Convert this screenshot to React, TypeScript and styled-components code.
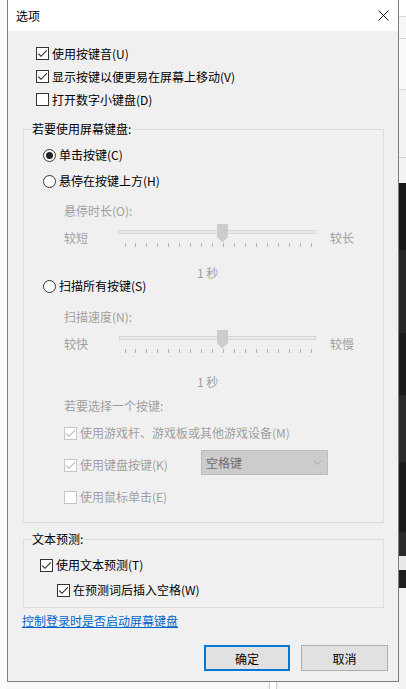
import styled, { createGlobalStyle } from 'styled-components';

const GlobalStyle = createGlobalStyle`
  html, body {
    margin: 0;
    padding: 0;
    background: #f9f9f9;
  }
  body {
    font-family: "Noto Sans CJK SC", "Noto Sans", sans-serif;
    font-size: 12px;
    color: #000;
  }
  #root {
    width: 406px;
    height: 689px;
    overflow: hidden;
  }
`;

const DISABLED = '#a0a0a0';

// background strip to the right of the dialog (other app windows)
const bands: [number, string][] = [
  [16, '#ffffff'], [1, '#d9d9d9'], [21, '#f7f7f7'], [1, '#d0d0d0'], [50, '#fafafa'],
  [1, '#dcdcdc'], [67, '#f3f3f3'], [1, '#cfcfcf'], [25, '#f3f3f3'], [67, '#171717'],
  [83, '#262626'], [62, '#1b1b1b'], [67, '#2a2a2a'], [70, '#1b1b1b'], [24, '#2b2b2b'],
  [14, '#e8e8e8'], [18, '#202020'], [101, '#f2f2f2'],
];

export default function App() {
  return (
    <>
      <GlobalStyle />
      <Page>
        <Gutter />
        <CenterColumn>
          <Dialog>
            <TitleBar>
              <Title>选项</Title>
              <CloseIcon />
            </TitleBar>

            <Body>
              <TopOptions>
                <CheckRow $h={23}>
                  <CheckBox checked />
                  <span>使用按键音(U)</span>
                </CheckRow>
                <CheckRow $h={23}>
                  <CheckBox checked />
                  <span>显示按键以便更易在屏幕上移动(V)</span>
                </CheckRow>
                <CheckRow $h={23}>
                  <CheckBox />
                  <span>打开数字小键盘(D)</span>
                </CheckRow>
              </TopOptions>

              <Group $mt={10}>
                <Legend>若要使用屏幕键盘:</Legend>
                <GroupBody $pt={11} $pb={17} $pl={19}>
                  <RadioRow>
                    <Radio selected />
                    <span>单击按键(C)</span>
                  </RadioRow>
                  <RadioRow $mt={12}>
                    <Radio />
                    <span>悬停在按键上方(H)</span>
                  </RadioRow>

                  <SubLabel $mt={15}>悬停时长(O):</SubLabel>
                  <SliderRow>
                    <SliderEnd>较短</SliderEnd>
                    <Slider />
                    <SliderEnd>较长</SliderEnd>
                  </SliderRow>
                  <ValueText $mt={17}>1 秒</ValueText>

                  <RadioRow>
                    <Radio />
                    <span>扫描所有按键(S)</span>
                  </RadioRow>

                  <SubLabel $mt={16}>扫描速度(N):</SubLabel>
                  <SliderRow>
                    <SliderEnd>较快</SliderEnd>
                    <Slider />
                    <SliderEnd>较慢</SliderEnd>
                  </SliderRow>
                  <ValueText $mt={20}>1 秒</ValueText>

                  <SubLabel $mt={10}>若要选择一个按键:</SubLabel>
                  <SubCheckRow $mt={11}>
                    <CheckBox checked disabled />
                    <span>使用游戏杆、游戏板或其他游戏设备(M)</span>
                  </SubCheckRow>
                  <KeyRow>
                    <KeyCheck>
                      <CheckBox checked disabled />
                      <span>使用键盘按键(K)</span>
                    </KeyCheck>
                    <Select>
                      <span>空格键</span>
                      <svg width="9" height="5" viewBox="0 0 9 5">
                        <path d="M0.5 0.5 L4.5 4.5 L8.5 0.5" fill="none" stroke="#a8a8a8" strokeWidth="1" />
                      </svg>
                    </Select>
                  </KeyRow>
                  <SubCheckRow $mt={14}>
                    <CheckBox disabled />
                    <span>使用鼠标单击(E)</span>
                  </SubCheckRow>
                </GroupBody>
              </Group>

              <Group $mt={8}>
                <Legend>文本预测:</Legend>
                <GroupBody $pt={10} $pb={9} $pl={16}>
                  <CheckRow $h={16}>
                    <CheckBox checked />
                    <span>使用文本预测(T)</span>
                  </CheckRow>
                  <CheckRow $h={16} $mt={9} $indent={17}>
                    <CheckBox checked />
                    <span>在预测词后插入空格(W)</span>
                  </CheckRow>
                </GroupBody>
              </Group>

              <Link href="#">控制登录时是否启动屏幕键盘</Link>

              <ButtonRow>
                <Button $primary $w={86}>确定</Button>
                <Button $w={87}>取消</Button>
              </ButtonRow>
            </Body>
          </Dialog>
          <BottomBand>
            <BandLines />
          </BottomBand>
        </CenterColumn>
        <RightStrip>
          {bands.map(([h, c], i) => (
            <Band key={i} $h={h} $bg={c} />
          ))}
        </RightStrip>
      </Page>
    </>
  );
}

function CloseIcon() {
  return (
    <svg width="11" height="11" viewBox="0 0 11 11">
      <path d="M0.5 0.5 L10.5 10.5 M10.5 0.5 L0.5 10.5" stroke="#111" strokeWidth="1" fill="none" />
    </svg>
  );
}

function CheckBox({ checked = false, disabled = false }: { checked?: boolean; disabled?: boolean }) {
  return (
    <Box $disabled={disabled}>
      {checked && (
        <svg width="11" height="11" viewBox="0 0 11 11">
          <path
            d="M1.3 5.6 L4 8.3 L9.8 2.4"
            fill="none"
            stroke={disabled ? '#b4b4b4' : '#222'}
            strokeWidth="1.1"
          />
        </svg>
      )}
    </Box>
  );
}

function Radio({ selected = false }: { selected?: boolean }) {
  return <Circle>{selected && <Dot />}</Circle>;
}

function Slider() {
  const ticks = Array.from({ length: 18 }, (_, i) => 5.5 + i * 10.95);
  return (
    <svg width="197" height="28" viewBox="0 0 197 28">
      <rect x="0.5" y="8.5" width="196" height="3" fill="#e7eaea" stroke="#d6d6d6" />
      {ticks.map((x, i) => (
        <line key={i} x1={Math.round(x) + 0.5} x2={Math.round(x) + 0.5} y1="21" y2="25" stroke="#b4b4b4" />
      ))}
      <path d="M98 2 H109 V15 L103.5 20.5 L98 15 Z" fill="#cccccc" />
    </svg>
  );
}

const Page = styled.div`
  display: flex;
  width: 406px;
  height: 689px;
`;

const Gutter = styled.div`
  width: 7px;
  background: #fbfbfb;
`;

const CenterColumn = styled.div`
  width: 392px;
  display: flex;
  flex-direction: column;
`;

const Dialog = styled.div`
  height: 682px;
  box-sizing: border-box;
  border: 1px solid #7f7f7f;
  border-top: none;
  background: #f0f0f0;
  display: flex;
  flex-direction: column;
`;

const TitleBar = styled.div`
  height: 31px;
  flex: 0 0 31px;
  background: #fff;
  display: flex;
  align-items: center;
  justify-content: space-between;
  padding: 0 9px 0 8px;

  svg {
    margin-top: -1px;
  }
`;

const Title = styled.span`
  font-size: 12px;
  line-height: 16px;
`;

const Body = styled.div`
  flex: 1;
  padding-top: 11px;
  display: flex;
  flex-direction: column;
`;

const TopOptions = styled.div`
  padding-left: 28px;
`;

const CheckRow = styled.div<{ $h?: number; $mt?: number; $indent?: number }>`
  height: ${(p) => p.$h ?? 16}px;
  margin-top: ${(p) => p.$mt ?? 0}px;
  margin-left: ${(p) => p.$indent ?? 0}px;
  display: flex;
  align-items: center;
  gap: 3px;
  line-height: 16px;
  white-space: nowrap;
`;

const SubCheckRow = styled(CheckRow)`
  margin-left: 21px;
  color: ${DISABLED};
`;

const Box = styled.span<{ $disabled?: boolean }>`
  width: 13px;
  height: 13px;
  flex: 0 0 13px;
  box-sizing: border-box;
  border: 1px solid ${(p) => (p.$disabled ? '#c4c4c4' : '#333')};
  background: #fff;
  display: flex;
  align-items: center;
  justify-content: center;
`;

const Circle = styled.span`
  width: 13px;
  height: 13px;
  flex: 0 0 13px;
  box-sizing: border-box;
  border: 1px solid #333;
  border-radius: 50%;
  background: #fff;
  display: flex;
  align-items: center;
  justify-content: center;
`;

const Dot = styled.span`
  width: 7px;
  height: 7px;
  border-radius: 50%;
  background: #222;
`;

const RadioRow = styled.div<{ $mt?: number }>`
  height: 14px;
  margin-top: ${(p) => p.$mt ?? 0}px;
  display: flex;
  align-items: center;
  gap: 3px;
  line-height: 16px;
`;

const Group = styled.fieldset<{ $mt: number }>`
  margin: ${(p) => p.$mt}px 14px 0 15px;
  padding: 0;
  border: 1px solid #dcdcdc;
  min-width: 0;
`;

const Legend = styled.legend`
  margin-left: 7px;
  padding: 0 1px;
  font-size: 12px;
  line-height: 16px;
`;

const GroupBody = styled.div<{ $pt: number; $pb: number; $pl: number }>`
  padding: ${(p) => p.$pt}px 0 ${(p) => p.$pb}px ${(p) => p.$pl}px;
  display: flex;
  flex-direction: column;
`;

const SubLabel = styled.div<{ $mt: number }>`
  margin: ${(p) => p.$mt}px 0 0 21px;
  line-height: 16px;
  height: 16px;
  color: ${DISABLED};
`;

const SliderRow = styled.div`
  margin: 3px 0 0 21px;
  display: grid;
  grid-template-columns: 55px 197px auto;
  column-gap: 0;
  height: 28px;

  svg {
    display: block;
  }
`;

const SliderEnd = styled.span`
  margin-top: 8px;
  line-height: 16px;
  color: ${DISABLED};

  &:last-child {
    margin-left: 14px;
  }
`;

const ValueText = styled.div<{ $mt: number }>`
  margin: ${(p) => p.$mt}px 0 0 154px;
  height: 12px;
  line-height: 12px;
  color: ${DISABLED};
`;

const KeyRow = styled.div`
  margin: 9px 0 0 21px;
  height: 25px;
  display: flex;
  align-items: flex-start;
`;

const KeyCheck = styled.div`
  flex: 0 0 137px;
  margin-top: 7px;
  height: 16px;
  display: flex;
  align-items: center;
  gap: 3px;
  line-height: 16px;
  color: ${DISABLED};
`;

const Select = styled.div`
  width: 127px;
  height: 25px;
  box-sizing: border-box;
  border: 1px solid #bdbdbd;
  background: #cccccc;
  color: #6d6d6d;
  display: flex;
  align-items: center;
  justify-content: space-between;
  padding: 0 5px 0 4px;
  line-height: 16px;
`;

const Link = styled.a`
  margin: 5px 0 0 14px;
  align-self: flex-start;
  line-height: 16px;
  color: #0066cc;
  text-decoration: underline;
`;

const ButtonRow = styled.div`
  margin-top: 16px;
  display: flex;
  justify-content: flex-end;
  gap: 11px;
  padding-right: 10px;
`;

const Button = styled.button<{ $primary?: boolean; $w: number }>`
  width: ${(p) => p.$w}px;
  height: 26px;
  box-sizing: border-box;
  background: #e1e1e1;
  border: ${(p) => (p.$primary ? '2px solid #0078d7' : '1px solid #adadad')};
  font-family: inherit;
  font-size: 12px;
  color: #000;
  padding: 0;
`;

const BottomBand = styled.div`
  flex: 1;
  background: #f7f7f7;
  display: flex;
  padding-left: 262px;
`;

const BandLines = styled.div`
  width: 6px;
  border-left: 1px solid #c8c8c8;
  border-right: 1px solid #c8c8c8;
  background: #fff;
`;

const RightStrip = styled.div`
  flex: 1;
  display: flex;
  flex-direction: column;
  overflow: hidden;
`;

const Band = styled.div<{ $h: number; $bg: string }>`
  flex: 0 0 ${(p) => p.$h}px;
  background: ${(p) => p.$bg};
`;
